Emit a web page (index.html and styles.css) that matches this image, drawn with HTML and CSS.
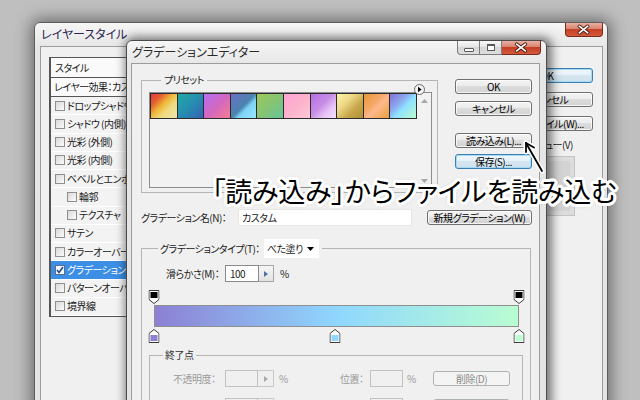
FILE: index.html
```html
<!DOCTYPE html>
<html lang="ja">
<head>
<meta charset="utf-8">
<title>グラデーションエディター</title>
<link rel="stylesheet" href="styles.css">
</head>
<body>
<div class="win outer">
  <div class="tbar">
    <span class="ttl ottl">レイヤースタイル</span>
    <div class="caps">
      <span class="cap close solo"><svg width="38" height="13" viewBox="0 0 38 13"><path d="M14 3 L23 10 M23 3 L14 10" stroke="#4a1a10" stroke-width="3.6" stroke-linecap="round"/><path d="M14 3 L23 10 M23 3 L14 10" stroke="#fff" stroke-width="1.8" stroke-linecap="round"/></svg></span>
    </div>
  </div>
  <div class="client oclient">
    <div class="lcol">
      <div class="shdr">スタイル</div>
      <div class="slist">
        <div class="srow sfx">レイヤー効果：カスタム</div>
        <div class="srow"><i class="cbx"></i>ドロップシャドウ</div>
        <div class="srow"><i class="cbx"></i>シャドウ (内側)</div>
        <div class="srow"><i class="cbx"></i>光彩 (外側)</div>
        <div class="srow"><i class="cbx"></i>光彩 (内側)</div>
        <div class="srow"><i class="cbx"></i>ベベルとエンボス</div>
        <div class="srow sub"><i class="cbx"></i>輪郭</div>
        <div class="srow sub"><i class="cbx"></i>テクスチャ</div>
        <div class="srow"><i class="cbx"></i>サテン</div>
        <div class="srow"><i class="cbx"></i>カラーオーバーレイ</div>
        <div class="srow sel"><i class="cbx"><svg width="8" height="8" viewBox="0 0 8 8"><path d="M1 4 L3 6.5 L7 1" stroke="#1f3f8f" stroke-width="1.5" fill="none"/></svg></i>グラデーションオーバーレイ</div>
        <div class="srow"><i class="cbx"></i>パターンオーバーレイ</div>
        <div class="srow"><i class="cbx"></i>境界線</div>
      </div>
    </div>
    <div class="rcol">
      <div class="btn def">OK</div>
      <div class="btn">キャンセル</div>
      <div class="btn">新規スタイル(W)...</div>
      <div class="pv"><i class="cbx"></i>プレビュー(V)</div>
      <div class="pvbox"></div>
    </div>
  </div>
</div>

<div class="win inner">
  <div class="tbar itbar">
    <span class="ttl">グラデーションエディター</span>
    <div class="caps icaps">
      <span class="cap min"><i></i></span>
      <span class="cap max"><i></i></span>
      <span class="cap close"><svg width="39" height="13" viewBox="0 0 39 13"><path d="M15 3 L24 10 M24 3 L15 10" stroke="#4a1a10" stroke-width="3.6" stroke-linecap="round"/><path d="M15 3 L24 10 M24 3 L15 10" stroke="#fff" stroke-width="1.8" stroke-linecap="round"/></svg></span>
    </div>
  </div>
  <div class="client iclient">
    <div class="toprow">
      <fieldset class="grp presets">
        <legend>プリセット</legend>
        <span class="menubtn"><svg width="11" height="11" viewBox="0 0 11 11"><circle cx="5.5" cy="5.5" r="5" fill="#f4f4f4" stroke="#6a6a6a"/><path d="M4 2.8 L7.6 5.5 L4 8.2 Z" fill="#000"/></svg></span>
        <div class="swbox">
          <div class="swatches">
            <span class="sw s1"></span><span class="sw s2"></span><span class="sw s3"></span><span class="sw s4"></span><span class="sw s5"></span>
            <span class="sw s6"></span><span class="sw s7"></span><span class="sw s8"></span><span class="sw s9"></span><span class="sw s10"></span>
          </div>
          <div class="sbar">
            <svg width="7" height="4" viewBox="0 0 7 4"><path d="M0 4 L3.5 0 L7 4 Z" fill="#a6a6a6"/></svg>
            <svg width="7" height="4" viewBox="0 0 7 4"><path d="M0 0 L3.5 4 L7 0 Z" fill="#a6a6a6"/></svg>
          </div>
        </div>
      </fieldset>
      <div class="bcol">
        <div class="btn">OK</div>
        <div class="btn">キャンセル</div>
        <div class="btn gap">読み込み(L)...</div>
        <div class="btn def">保存(S)...</div>
      </div>
    </div>

    <div class="namerow">
      <span class="nlabel">グラデーション名(N)：</span>
      <span class="field">カスタム</span>
      <div class="btn nbtn">新規グラデーション(W)</div>
    </div>

    <fieldset class="grp typegrp">
      <legend class="tlegend">グラデーションタイプ(T)：<span class="dd">べた塗り<svg width="7" height="4" viewBox="0 0 7 4"><path d="M0 0 L7 0 L3.5 4 Z" fill="#000"/></svg></span></legend>
      <div class="smrow">
        <span class="smlabel">滑らかさ(M)：</span>
        <span class="num">100</span><span class="spin"><svg width="4" height="6" viewBox="0 0 4 6"><path d="M0 0 L4 3 L0 6 Z" fill="#4f6fa8"/></svg></span>
        <span class="pct">%</span>
      </div>

      <div class="gedit">
        <div class="stoprow">
          <span class="stop" style="left:0%"><svg width="11" height="14" viewBox="0 0 11 14"><path d="M0.5 0.5 H10.5 V9.5 L5.5 13.5 L0.5 9.5 Z" fill="#fff" stroke="#3a3a3a"/><rect x="2" y="2" width="7" height="6" fill="#000"/></svg></span>
          <span class="stop" style="left:100%"><svg width="11" height="14" viewBox="0 0 11 14"><path d="M0.5 0.5 H10.5 V9.5 L5.5 13.5 L0.5 9.5 Z" fill="#fff" stroke="#3a3a3a"/><rect x="2" y="2" width="7" height="6" fill="#000"/></svg></span>
        </div>
        <div class="gbar"></div>
        <div class="stoprow">
          <span class="stop" style="left:0%"><svg width="11" height="14" viewBox="0 0 11 14"><path d="M5.5 0.5 L10.5 4.5 V13.5 H0.5 V4.5 Z" fill="#fff" stroke="#3a3a3a"/><rect x="2" y="6" width="7" height="6" fill="#8c80d4"/></svg></span>
          <span class="stop" style="left:49.5%"><svg width="11" height="14" viewBox="0 0 11 14"><path d="M5.5 0.5 L10.5 4.5 V13.5 H0.5 V4.5 Z" fill="#fff" stroke="#3a3a3a"/><rect x="2" y="6" width="7" height="6" fill="#8fd7fe"/></svg></span>
          <span class="stop" style="left:100%"><svg width="11" height="14" viewBox="0 0 11 14"><path d="M5.5 0.5 L10.5 4.5 V13.5 H0.5 V4.5 Z" fill="#fff" stroke="#3a3a3a"/><rect x="2" y="6" width="7" height="6" fill="#b9fdd2"/></svg></span>
        </div>
      </div>

      <fieldset class="grp endgrp">
        <legend>終了点</legend>
        <div class="erow">
          <span class="elabel">不透明度：</span>
          <span class="num dis"></span><span class="spin dis"><svg width="4" height="6" viewBox="0 0 4 6"><path d="M0 0 L4 3 L0 6 Z" fill="#a9a9a9"/></svg></span>
          <span class="epct">%</span>
          <span class="plabel">位置：</span>
          <span class="num dis"></span>
          <span class="ppct">%</span>
          <div class="btn disb">削除(D)</div>
        </div>
        <div class="erow erow2">
          <span class="elabel"></span>
          <span class="num dis"></span><span class="spin dis"></span>
          <span class="epct"></span>
          <span class="plabel"></span>
          <span class="num dis"></span>
          <span class="ppct"></span>
          <div class="btn disb"></div>
        </div>
      </fieldset>
    </fieldset>
  </div>
</div>

<div class="callout">「読み込み」からファイルを読み込む</div>
<svg class="arrow" width="30" height="40" viewBox="0 0 30 40">
  <g stroke="#fff" stroke-width="5" stroke-linecap="round" fill="none"><path d="M24 33 L8 5"/><path d="M8 5 L8 14 M8 5 L16 9.5"/></g>
  <g stroke="#000" stroke-width="1.8" stroke-linecap="round" fill="none"><path d="M24 33 L8 5"/><path d="M8 5 L8 14 M8 5 L16 9.5"/></g>
</svg>
</body>
</html>
```
FILE: styles.css
```css
* { box-sizing: border-box; margin: 0; padding: 0; }
html, body { width: 640px; height: 400px; overflow: hidden; }
body {
  position: relative;
  background: #bfbfbf;
  font-family: "Noto Sans CJK JP", "Noto Sans", sans-serif;
  font-size: 10px;
  letter-spacing: -0.5px;
  line-height: 1.2;
  color: #1a1a1a;
  font-feature-settings: "palt";
}

/* windows */
.win {
  position: absolute;
  display: flex;
  flex-direction: column;
  border: 1px solid #5c5c5c;
  border-radius: 6px 6px 0 0;
  background: linear-gradient(#f6f6f6, #e6e6e6 24px, #e4e4e4);
}
.outer {
  left: 34px; top: 22px; width: 574px; height: 400px;
  padding: 0 4px 0 5px;
  box-shadow: 0 0 16px 3px rgba(0,0,0,.45);
}
.inner {
  left: 126px; top: 40px; width: 421px; height: 380px;
  padding: 0 6px 0 4px;
  border-color: #4a4a4a;
  box-shadow: 2px 0 10px 3px rgba(0,0,0,.5);
}
.tbar { height: 23px; display: flex; align-items: center; flex: none; }
.itbar { height: 22px; }
.ttl { font-size: 12px; letter-spacing: 0; padding-left: 1px; color: #2a2a2a; }
.ottl { color: #2c2450; }
.caps { margin-left: auto; align-self: flex-start; display: flex; }
.icaps { margin-right: -1px; }
.cap {
  height: 14px; display: flex; align-items: center; justify-content: center;
  border: 1px solid #7c7c7c; border-top: none;
  background: linear-gradient(#f8f8f8, #e6e6e6 45%, #d6d6d6 50%, #dedede);
}
.cap.min { width: 23px; border-radius: 0 0 0 4px; }
.cap.max { width: 22px; border-left: none; }
.cap.close {
  width: 39px; border-left: none; border-color: #7b2b1b;
  border-radius: 0 0 4px 0;
  background: linear-gradient(#eab0a2, #d98470 45%, #c64024 50%, #d35a3e);
}
.cap.close.solo { width: 38px; border-left: 1px solid #7b2b1b; border-radius: 0 0 4px 4px; }
.cap.min i { width: 10px; height: 4px; border: 1px solid #5a5a5a; background: #fff; margin-top: 5px; border-radius: 1px; }
.cap.max i { width: 8px; height: 7px; border: 1px solid #5a5a5a; border-top-width: 2px; background: #fff; }

.client {
  flex: 1;
  background: #f0f0f0;
  border: 1px solid #9c9c9c;
}

/* outer (layer style) */
.oclient { display: flex; padding: 10px 9px 0 8px; }
.lcol { width: 86px; }
.shdr {
  height: 21px; display: flex; align-items: center; padding-left: 4px;
  border: 1px solid #555; border-left-width: 2px; background: #fafafa;
  white-space: nowrap; overflow: hidden;
}
.slist {
  border: 1px solid #555; border-left-width: 2px; border-top: none;
  background: #f3f3f3;
}
.srow {
  height: 18.25px; display: flex; align-items: center; padding-left: 4px;
  border-bottom: 1px solid #fff; white-space: nowrap; overflow: hidden;
}
.srow.sfx { height: 19px; background: #fafafa; border-bottom: 1px solid #555; padding-left: 3px; }
.srow.sub { padding-left: 16px; }
.srow.sel { background: #3c8fe5; color: #fff; }
.cbx {
  display: inline-flex; align-items: center; justify-content: center;
  width: 10px; height: 10px; margin-right: 2px; flex: none;
  border: 1px solid #8e8f8f;
  background: linear-gradient(135deg, #d9d9d9, #fbfbfb);
}
.sel .cbx { background: #f4f7fc; border-color: #5a6f90; }

.rcol { margin-left: auto; width: 92px; padding-top: 11px; display: flex; flex-direction: column; }
.rcol .btn + .btn { margin-top: 9px; }
.pv { height: 14px; margin-top: 7px; display: flex; align-items: center; padding-left: 4px; white-space: nowrap; }
.pv .cbx { margin-right: 4px; }
.pvbox { width: 32px; height: 60px; margin: 4px 0 0 42px; background: #d3d3d3; border: 1px solid #c4c4c4; box-shadow: inset 0 0 0 4px #dcdcdc; }

/* buttons */
.btn {
  height: 15px; display: flex; align-items: center; justify-content: center;
  border: 1px solid #707070; border-radius: 3px; white-space: nowrap;
  color: #000; line-height: 1;
  background: linear-gradient(#f4f4f4, #ececec 45%, #dddddd 50%, #d2d2d2);
  box-shadow: inset 0 0 0 1px rgba(255,255,255,.75);
}
.btn.def {
  border-color: #3c7fb1;
  box-shadow: inset 0 0 0 1px #a6daf7;
  background: linear-gradient(#f0f7fc, #e6f1f8 45%, #d6e6f0 50%, #cfe1ec);
}
.btn.disb { color: #8a8a8a; border-color: #adb2b5; background: #f4f4f4; box-shadow: none; }

/* inner (gradient editor) */
.iclient { padding: 9px 7px 0 9px; }
.toprow { display: flex; }
.grp { border: 1px solid #b5b5b5; min-width: 0; position: relative; }
.grp > legend { padding: 0 3px; line-height: 14px; height: 14px; color: #1a1a1a; white-space: nowrap; }
.presets { width: 297px; height: 120px; padding: 5px 5px 0 7px; }
.presets > legend { margin-left: 12px; }
.menubtn { position: absolute; right: 12px; top: -3px; display: flex; }
.swbox {
  height: 96px; display: flex; justify-content: space-between;
  border: 1px solid #8d8d8d; background: #f2f2f2;
}
.swatches {
  width: 268px; height: 26px; padding: 1px;
  display: grid; grid-template-columns: repeat(10, 1fr); gap: 1px;
  background: #2a2a2a;
}
.sbar { width: 14px; display: flex; flex-direction: column; align-items: center; justify-content: space-between; padding: 6px 0 4px; }
.s1 { background: linear-gradient(135deg, #e43a3a 0%, #e45a30 22%, #f0b838 45%, #f0da80 65%, #ece6b0 100%); }
.s2 { background: linear-gradient(135deg, #20aaa2 0%, #2690b0 45%, #3462b4 100%); }
.s3 { background: linear-gradient(135deg, #b46ff2 0%, #d267c0 50%, #f77d92 100%); }
.s4 { background: linear-gradient(135deg, #6c70c6 0%, #4a84ae 50%, #7ed2f5 62%, #9ae8ff 100%); }
.s5 { background: linear-gradient(135deg, #9cc85a 0%, #86c474 50%, #66c59a 100%); }
.s6 { background: linear-gradient(135deg, #ffa4d6 0%, #fcb2cc 50%, #ffc8d6 100%); }
.s7 { background: linear-gradient(135deg, #b46fe6 0%, #c88ee6 45%, #e6c4f6 70%, #f4e2ff 100%); }
.s8 { background: linear-gradient(135deg, #fff4aa 0%, #ecd886 35%, #c8a64a 65%, #b08e34 100%); }
.s9 { background: linear-gradient(135deg, #e6963a 0%, #f4a866 38%, #ffb88c 55%, #e8a040 100%); }
.s10 { background: linear-gradient(135deg, #8470d2 0%, #8ca8ee 35%, #8ee0ff 55%, #bdfdd0 100%); }

.bcol { width: 77px; margin-left: 17px; padding-top: 6px; display: flex; flex-direction: column; }
.bcol .btn + .btn { margin-top: 7px; }
.bcol .btn.gap { margin-top: 17px; }
.bcol .btn.def { margin-top: 6px; }

.namerow { display: flex; align-items: center; height: 17px; margin-top: 16px; }
.nlabel { width: 97px; flex: none; white-space: nowrap; }
.field { width: 174px; height: 17px; display: flex; align-items: center; padding-left: 3px; background: #fff; border: 1px solid #e6e6e6; }
.nbtn { width: 105px; margin-left: 15px; }

.typegrp { width: 390px; margin-top: 13px; height: 170px; padding: 0; }
.tlegend { margin-left: 16px; height: 19px !important; display: flex; align-items: center; padding: 0 3px 0 2px !important; }
.dd { width: 55px; height: 19px; margin-left: 4px; background: #fff; display: flex; align-items: center; justify-content: space-between; padding: 0 5px 0 3px; }
.smrow { display: flex; align-items: center; height: 17px; margin-top: 7px; padding-left: 24px; }
.smlabel { width: 59px; padding-right: 3px; flex: none; white-space: nowrap; }
.num { width: 34px; height: 17px; flex: none; display: flex; align-items: center; padding-left: 4px; background: #fff; border: 1px solid #8a8a8a; }
.spin { width: 15px; height: 17px; flex: none; display: flex; align-items: center; justify-content: center; border: 1px solid #a6a6a6; border-left: none; background: linear-gradient(#f6f6f6, #e2e2e2); }
.pct { margin-left: 6px; }

.gedit { margin: 8px 0 0 8px; width: 373px; padding: 0 4px; }
.stoprow { position: relative; height: 14px; }
.stop { position: absolute; top: 0; transform: translateX(-50%); display: flex; }
.gbar {
  height: 22px; margin: 1px 0 2px; border: 1px solid #8f8f8f;
  background: linear-gradient(90deg, #8c80d4 0%, #8fd7fe 50%, #b9fdd2 100%);
}

.endgrp { width: 374px; margin: 5px 0 0 7px; height: 80px; padding: 8px 0 0 0; border-color: #b5b5b5; }
.endgrp > legend { margin-left: 13px; padding: 0 2px; color: #333; }
.erow { display: flex; align-items: center; height: 17px; color: #9a9a9a; white-space: nowrap; }
.erow2 { margin-top: 11px; }
.elabel { width: 52px; margin-left: 23px; flex: none; }
.num.dis { width: 33px; border-color: #c2c2c2; background: #f0f0f0; }
.spin.dis { width: 16px; border-color: #c8c8c8; background: #efefef; }
.epct { width: 66px; padding-left: 5px; flex: none; }
.plabel { width: 30px; flex: none; }
.ppct { width: 30px; padding-left: 4px; flex: none; }
.btn.disb { width: 77px; flex: none; }

/* annotation */
.callout {
  position: absolute; left: 212px; top: 175px;
  font-size: 27px; letter-spacing: -0.2px; line-height: 32px; white-space: nowrap; color: #000;
  text-shadow:
    3px 0 #fff, -3px 0 #fff, 0 3px #fff, 0 -3px #fff,
    2.8px 1.1px #fff, 2.1px 2.1px #fff, 1.1px 2.8px #fff,
    -1.1px 2.8px #fff, -2.1px 2.1px #fff, -2.8px 1.1px #fff,
    -2.8px -1.1px #fff, -2.1px -2.1px #fff, -1.1px -2.8px #fff,
    1.1px -2.8px #fff, 2.1px -2.1px #fff, 2.8px -1.1px #fff,
    1.5px 0 #fff, -1.5px 0 #fff, 0 1.5px #fff, 0 -1.5px #fff,
    0 0 5px rgba(0,0,0,.35);
}
.arrow { position: absolute; left: 518px; top: 138px; }
```
